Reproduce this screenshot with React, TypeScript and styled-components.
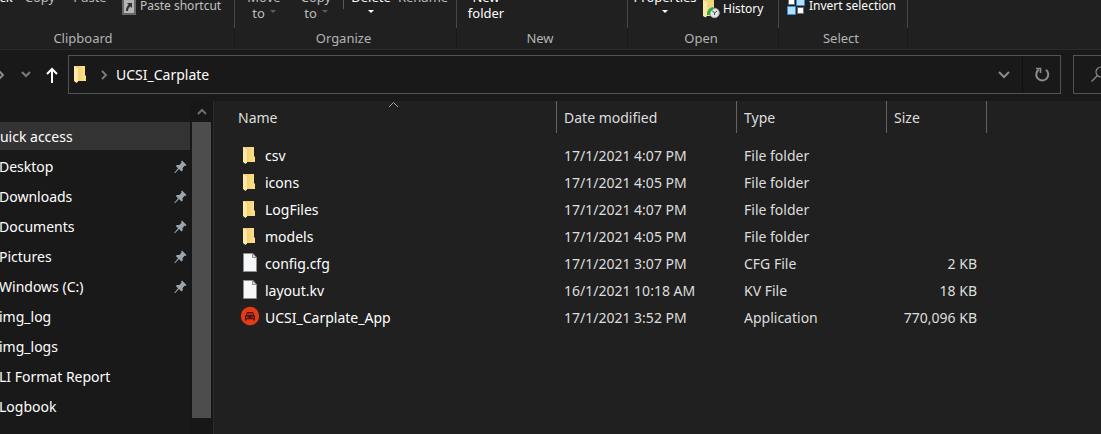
import React from "react";
import styled, { createGlobalStyle } from "styled-components";

const GlobalStyle = createGlobalStyle`
  *, *::before, *::after { box-sizing: border-box; }
  html, body { margin: 0; background: #202020; }
  body {
    overflow: hidden;
    color: #ffffff;
    font-family: "Noto Sans", "Open Sans", sans-serif;
    font-size: 14px;
    line-height: 20px;
  }
  button { font: inherit; color: inherit; background: none; border: 0; margin: 0; padding: 0; }
  svg { display: block; flex: none; overflow: visible; }
`;

const Window = styled.div`
  display: flex;
  flex-direction: column;
  min-height: 100vh;
  overflow: hidden;
`;

/* ---------- ribbon ---------- */

const Ribbon = styled.div`
  display: flex;
  background: #202020;
  border-bottom: 1px solid #2b2b2b;
  font-size: 13px;
  line-height: 16px;
  white-space: nowrap;
  overflow: hidden;
`;

const Group = styled.section<{ $width: number; $scrolled?: number }>`
  flex: none;
  width: ${(p) => p.$width}px;
  margin-left: ${(p) => -(p.$scrolled ?? 0)}px;
`;

const Tools = styled.div<{ $start: number }>`
  display: flex;
  align-items: flex-start;
  height: 28px;
  padding-left: ${(p) => p.$start}px;
  border-right: 1px solid #484848;
`;

const GroupLabel = styled.div`
  height: 21px;
  padding: 2px 4px 3px 0;
  border-right: 1px solid #191919;
  color: #b4b4b4;
  text-align: center;
`;

const BigButton = styled.button<{ $width: number; $dim?: boolean }>`
  display: flex;
  flex-direction: column;
  align-items: center;
  flex: none;
  width: ${(p) => p.$width}px;
  margin-top: -11px;
  color: ${(p) => (p.$dim ? "#bcbcbc" : "#ffffff")};
`;

const SecondLine = styled.span`
  display: flex;
  gap: 5px;
  height: 16px;
`;

const Caret = styled.i<{ $dim?: boolean }>`
  height: 0;
  margin-top: 5px;
  border: 3px solid transparent;
  border-bottom: 0;
  border-top-color: ${(p) => (p.$dim ? "#5c5c5c" : "#ffffff")};
`;

const ToolDivider = styled.span`
  width: 1px;
  height: 9px;
  background: #5a5a5a;
`;

const SmallButton = styled.button<{ $dim?: boolean; $drop?: number; $start?: number }>`
  display: flex;
  align-items: center;
  gap: 4px;
  height: 20px;
  margin-top: ${(p) => (p.$drop ?? 0) - 4}px;
  padding-left: ${(p) => p.$start ?? 0}px;
  color: ${(p) => (p.$dim ? "#c0c0c0" : "#ffffff")};
  font-size: 12px;
`;

/* ---------- address row ---------- */

const AddressRow = styled.div`
  display: flex;
  align-items: center;
  height: 51px;
  padding-bottom: 2px;
  background: #191919;
`;

const NavButton = styled.button<{ $width: number }>`
  display: flex;
  justify-content: center;
  align-items: center;
  flex: none;
  width: ${(p) => p.$width}px;
  height: 39px;
`;

const HistoryButtons = styled.div`
  display: flex;
  width: 68px;
  flex: none;
`;

const AddressBox = styled.div`
  display: flex;
  align-items: center;
  flex: 1;
  height: 39px;
  min-width: 0;
  padding-left: 2px;
  border: 1px solid #535353;
`;

const Crumb = styled.button`
  flex: 1;
  height: 37px;
  text-align: left;
`;

const Refresh = styled(NavButton)`
  height: 37px;
  border-left: 1px solid #111111;
`;

const SearchBox = styled.button`
  flex: none;
  width: 28px;
  height: 39px;
  margin-left: 12px;
  padding-left: 17px;
  border: 1px solid #535353;
  border-right: 0;
  overflow: hidden;
`;

/* ---------- body ---------- */

const Body = styled.div`
  display: flex;
  flex: 1;
`;

const Sidebar = styled.aside`
  display: flex;
  flex: none;
  width: 214px;
  background: #191919;
  border-right: 1px solid #2b2b2b;
`;

const NavList = styled.nav`
  display: flex;
  flex-direction: column;
  gap: 2px;
  flex: 1;
  padding-top: 21px;
`;

const NavItem = styled.a<{ $selected?: boolean; $indent?: number }>`
  display: flex;
  align-items: center;
  justify-content: space-between;
  height: 28px;
  padding: 2px 3px 0 0;
  color: #ffffff;
  text-decoration: none;
  text-indent: ${(p) => p.$indent ?? -1}px;
  background: ${(p) => (p.$selected ? "#333333" : "transparent")};
`;

const Scrollbar = styled.div`
  display: flex;
  flex-direction: column;
  flex: none;
  width: 23px;
  padding: 0 2px;
  background: #171717;
`;

const ScrollUp = styled.button`
  display: flex;
  align-items: center;
  justify-content: center;
  height: 21px;
`;

const Thumb = styled.div`
  height: 296px;
  background: #4d4d4d;
`;

const FilePane = styled.main`
  flex: 1;
  min-width: 0;
  background: #202020;
`;

const FileTable = styled.table`
  table-layout: fixed;
  width: 773px;
  border-spacing: 0;
  white-space: nowrap;
`;

const HeadCell = styled.th`
  position: relative;
  height: 32px;
  padding: 1px 0 0 7px;
  border-right: 1px solid #636363;
  color: #dedede;
  font-weight: 400;
  text-align: left;

  &:first-child { padding-left: 24px; }
`;

const SortMark = styled.svg`
  position: absolute;
  top: 0;
  left: calc(50% + 3px);
`;

const Spacer = styled.td`
  height: 9px;
  padding: 0;
`;

const Cell = styled.td<{ $right?: boolean }>`
  height: 27px;
  padding: ${(p) => (p.$right ? "0 10px 0 0" : "0 0 0 7px")};
  color: #dedede;
  text-align: ${(p) => (p.$right ? "right" : "left")};

  &:first-child { padding-left: 26px; color: #ffffff; }
`;

const FileName = styled.span`
  display: flex;
  align-items: center;
  gap: 5px;
`;

/* ---------- icons ---------- */

const FolderIcon = () => (
  <svg width="20" height="20" viewBox="0 0 20 20" aria-hidden="true">
    <defs>
      <linearGradient id="folderBack" x1="0" x2="1">
        <stop offset="0" stopColor="#efc866" />
        <stop offset="1" stopColor="#ffe18b" />
      </linearGradient>
    </defs>
    <path d="M3 1H14V10L15 11V16H3Z" fill="url(#folderBack)" />
    <path d="M3 1L7 3.5V16.5L5.500 18L3 16Z" fill="#ffe9a9" />
  </svg>
);

const FileIcon = () => (
  <svg width="20" height="20" viewBox="0 0 20 20" aria-hidden="true">
    <path d="M3.500 -.5H13L16.500 3.500V17.500H3.500Z" fill="#f7f8f9" stroke="#8f8f8f" />
    <path d="M12.500 -.5V3.500H16.500Z" fill="#dcdcdc" stroke="#8f8f8f" />
  </svg>
);

const AppIcon = () => (
  <svg width="20" height="20" viewBox="0 1 20 20" aria-hidden="true">
    <circle cx="10" cy="9" r="9.200" fill="#e63a17" />
    <path
      d="M7 5H13L14.200 8L15 9V13.500H13.200V12.300H6.800V13.500H5V9L5.800 8Z"
      fill="#4a1a12"
    />
    <path d="M7.400 6.200H12.600L13.200 8H6.800Z" fill="#b23118" />
    <path d="M6.300 9.700H8.300V10.700H6.300ZM11.700 9.700H13.700V10.700H11.700Z" fill="#e63a17" />
  </svg>
);

const PinIcon = () => (
  <svg width="13" height="14" viewBox="0 0 13 14" aria-hidden="true">
    <path
      d="M8 .5L12.500 5L11.600 6L10.600 5.700L8.600 8L8.700 10.500L7.500 11.600L5 9.100L1 13.300L.3 12.700L4 8.300L1.800 6L2.900 4.900L5.300 5L7.500 2.800L7.100 1.500Z"
      fill="#9aa5ad"
    />
  </svg>
);

const Chevron = ({ d, w, h, color }: { d: string; w: number; h: number; color: string }) => (
  <svg width={w} height={h} viewBox={`0 0 ${w} ${h}`} aria-hidden="true">
    <path d={d} fill="none" stroke={color} strokeWidth="2" />
  </svg>
);

const UpIcon = () => (
  <svg width="14" height="18" viewBox="0 0 14 18" aria-hidden="true">
    <path d="M7 17V3M2 8L7 3L12 8" fill="none" stroke="#ffffff" strokeWidth="2" />
  </svg>
);

const RefreshIcon = () => (
  <svg width="16" height="16" viewBox="0 0 16 16" aria-hidden="true">
    <path d="M12 2.800A6 6 0 1 1 4.800 2.600" fill="none" stroke="#8c8c8c" strokeWidth="2" />
    <path d="M2 1.500H6.500V6" fill="none" stroke="#8c8c8c" strokeWidth="1.600" />
  </svg>
);

const SearchIcon = () => (
  <svg width="17" height="17" viewBox="0 0 17 17" aria-hidden="true">
    <circle cx="10" cy="6" r="5" fill="none" stroke="#8c8c8c" strokeWidth="1.200" />
    <path d="M6.500 9.500L.5 15.500" stroke="#8c8c8c" strokeWidth="1.300" />
  </svg>
);

const ShortcutIcon = () => (
  <svg width="14" height="18" viewBox="0 0 14 18" aria-hidden="true">
    <path d="M0 0H14V18H0Z" fill="#686868" />
    <path d="M2 3H12V16H2Z" fill="#b5b5b5" />
    <path d="M5 6H10V11L8.500 9.500C7 10.500 6 12 6 14H4C3.800 11.500 5 9.300 6.700 7.800Z" fill="#333333" />
  </svg>
);

const HistoryIcon = () => (
  <svg width="16" height="20" viewBox="0 0 16 20" aria-hidden="true">
    <path d="M0 0H11V17H0Z" fill="#f5d57a" />
    <path d="M0 1L4 3V17L2.500 18.500L0 17Z" fill="#ffe9a9" />
    <circle cx="11.500" cy="14" r="4.800" fill="#e4e4e4" stroke="#9c9c9c" />
    <path d="M11.500 14L9 11.500M11.500 14L14 12M11.500 14V16" stroke="#454545" />
    <path d="M4 16C4 11 6.500 8.500 10.500 8V10.500C8 11.500 7 13 7.200 16Z" fill="#27ad45" />
  </svg>
);

const InvertIcon = () => (
  <svg width="18" height="18" viewBox="0 0 18 18" aria-hidden="true">
    <path d="M1.500 1.500H7.500V7.500H1.500Z" fill="#ffffff" stroke="#707070" />
    <path d="M9.500 .5H17.500V8.500H9.500Z" fill="#b9defa" stroke="#2e8fdd" />
    <path d="M.5 9.500H8.500V17.500H.5Z" fill="#b9defa" stroke="#2e8fdd" />
    <path d="M10.500 10.500H16.500V16.500H10.500Z" fill="#ffffff" stroke="#707070" />
  </svg>
);

/* ---------- data ---------- */

const places = [
  { name: "Quick access", selected: true, indent: -11 },
  { name: "Desktop", pinned: true },
  { name: "Downloads", pinned: true },
  { name: "Documents", pinned: true },
  { name: "Pictures", pinned: true },
  { name: "Windows (C:)", pinned: true },
  { name: "img_log" },
  { name: "img_logs" },
  { name: "LI Format Report" },
  { name: "Logbook" },
];

const files = [
  { icon: FolderIcon, name: "csv", date: "17/1/2021 4:07 PM", type: "File folder", size: "" },
  { icon: FolderIcon, name: "icons", date: "17/1/2021 4:05 PM", type: "File folder", size: "" },
  { icon: FolderIcon, name: "LogFiles", date: "17/1/2021 4:07 PM", type: "File folder", size: "" },
  { icon: FolderIcon, name: "models", date: "17/1/2021 4:05 PM", type: "File folder", size: "" },
  { icon: FileIcon, name: "config.cfg", date: "17/1/2021 3:07 PM", type: "CFG File", size: "2 KB" },
  { icon: FileIcon, name: "layout.kv", date: "16/1/2021 10:18 AM", type: "KV File", size: "18 KB" },
  { icon: AppIcon, name: "UCSI_Carplate_App", date: "17/1/2021 3:52 PM", type: "Application", size: "770,096 KB" },
];

export default function App() {
  return (
    <Window>
      <GlobalStyle />
      <Ribbon>
        <Group $width={299} $scrolled={64}>
          <Tools $start={0}>
            <BigButton $width={80}>Pin to Quick</BigButton>
            <BigButton $width={48} $dim>Copy</BigButton>
            <BigButton $width={52} $dim>Paste</BigButton>
            <SmallButton $dim $start={6}><ShortcutIcon />Paste shortcut</SmallButton>
          </Tools>
          <GroupLabel>Clipboard</GroupLabel>
        </Group>
        <Group $width={222}>
          <Tools $start={4}>
            <BigButton $width={50} $dim>Move<SecondLine>to <Caret $dim /></SecondLine></BigButton>
            <BigButton $width={54} $dim>Copy<SecondLine>to <Caret $dim /></SecondLine></BigButton>
            <ToolDivider />
            <BigButton $width={54}>Delete<SecondLine><Caret /></SecondLine></BigButton>
            <BigButton $width={50} $dim>Rename</BigButton>
          </Tools>
          <GroupLabel>Organize</GroupLabel>
        </Group>
        <Group $width={171}>
          <Tools $start={4}>
            <BigButton $width={50}>New<SecondLine>folder</SecondLine></BigButton>
          </Tools>
          <GroupLabel>New</GroupLabel>
        </Group>
        <Group $width={151}>
          <Tools $start={4}>
            <BigButton $width={66}>Properties<SecondLine><Caret /></SecondLine></BigButton>
            <SmallButton $drop={3} $start={5}><HistoryIcon />History</SmallButton>
          </Tools>
          <GroupLabel>Open</GroupLabel>
        </Group>
        <Group $width={129}>
          <Tools $start={8}>
            <SmallButton><InvertIcon />Invert selection</SmallButton>
          </Tools>
          <GroupLabel>Select</GroupLabel>
        </Group>
      </Ribbon>

      <AddressRow>
        <HistoryButtons>
          <NavButton $width={16} aria-label="Forward">
            <Chevron w={16} h={10} d="M-1 1L3 5L-1 9" color="#8a8a8a" />
          </NavButton>
          <NavButton $width={20} aria-label="Recent locations">
            <Chevron w={10} h={7} d="M1 1L5 5L9 1" color="#7a7a7a" />
          </NavButton>
          <NavButton $width={32} aria-label="Up"><UpIcon /></NavButton>
        </HistoryButtons>
        <AddressBox>
          <FolderIcon />
          <NavButton $width={25} aria-label="Show folders">
            <Chevron w={6} h={10} d="M1 1L5 5L1 9" color="#7a7a7a" />
          </NavButton>
          <Crumb>UCSI_Carplate</Crumb>
          <NavButton $width={36} aria-label="Previous locations">
            <Chevron w={12} h={8} d="M1 1L6 6L11 1" color="#8c8c8c" />
          </NavButton>
          <Refresh $width={38} aria-label="Refresh"><RefreshIcon /></Refresh>
        </AddressBox>
        <SearchBox aria-label="Search"><SearchIcon /></SearchBox>
      </AddressRow>

      <Body>
        <Sidebar>
          <NavList>
            {places.map((p) => (
              <NavItem key={p.name} href="#" $selected={p.selected} $indent={p.indent}>
                {p.name}
                {p.pinned && <PinIcon />}
              </NavItem>
            ))}
          </NavList>
          <Scrollbar>
            <ScrollUp aria-label="Scroll up">
              <Chevron w={10} h={7} d="M1 6L5 2L9 6" color="#6e6e6e" />
            </ScrollUp>
            <Thumb />
          </Scrollbar>
        </Sidebar>
        <FilePane>
          <FileTable>
            <colgroup>
              <col width="343" />
              <col width="180" />
              <col width="150" />
              <col width="100" />
            </colgroup>
            <thead>
              <tr>
                <HeadCell>
                  Name
                  <SortMark width="11" height="7" viewBox="0 0 11 7" aria-hidden="true">
                    <path d="M1 6L5.500 1.500L10 6" fill="none" stroke="#a0a0a0" />
                  </SortMark>
                </HeadCell>
                <HeadCell>Date modified</HeadCell>
                <HeadCell>Type</HeadCell>
                <HeadCell>Size</HeadCell>
              </tr>
            </thead>
            <tbody>
              <tr aria-hidden="true"><Spacer colSpan={4} /></tr>
              {files.map((f) => (
                <tr key={f.name}>
                  <Cell><FileName><f.icon />{f.name}</FileName></Cell>
                  <Cell>{f.date}</Cell>
                  <Cell>{f.type}</Cell>
                  <Cell $right>{f.size}</Cell>
                </tr>
              ))}
            </tbody>
          </FileTable>
        </FilePane>
      </Body>
    </Window>
  );
}
